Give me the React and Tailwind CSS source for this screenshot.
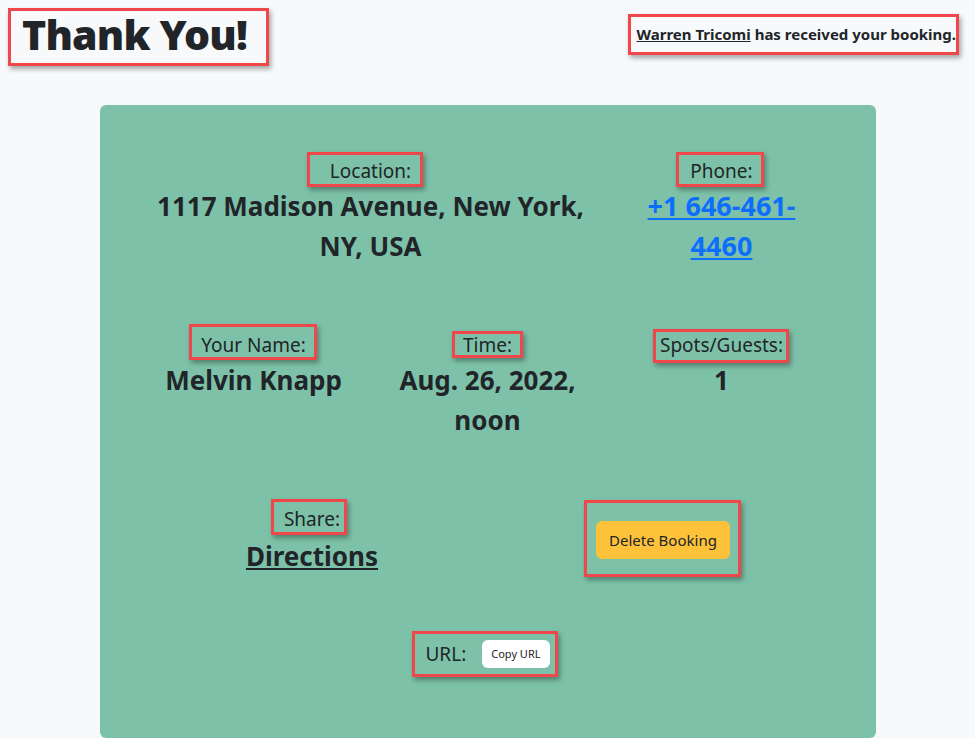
import React from "react";

function Mark({ className }) {
  return (
    <span
      className={`pointer-events-none absolute border-[3px] border-[#f0474a] shadow-[2px_3px_5px_rgba(0,0,0,0.35)] ${className}`}
    />
  );
}

function Label({ children, box }) {
  return (
    <div className="leading-[30px] text-[19px]">
      <span className="relative inline-block">
        {children}
        <Mark className={box} />
      </span>
    </div>
  );
}

function Value({ children, className = "" }) {
  return <div className={`text-[26px] font-bold leading-[40px] ${className}`}>{children}</div>;
}

export default function App() {
  return (
    <div className="min-h-screen bg-[#f8f9fa] font-['Noto_Sans',sans-serif] text-[#212529]">
      <header className="flex h-[68px] items-center justify-between pl-[22px] pr-[19px]">
        <h1 className="relative text-[41px] font-black leading-[50px] tracking-[-0.8px]">
          Thank You!
          <Mark className="-left-[14px] -right-[22px] top-[-1px] -bottom-[7px]" />
        </h1>
        <p className="relative text-[15px] font-bold leading-[22px]">
          <a href="#" className="underline">Warren Tricomi</a> has received your booking.
          <Mark className="-left-[9px] -right-[3px] -top-[9px] -bottom-[10px]" />
        </p>
      </header>

      <div className="mx-auto mt-[37px] h-[633px] w-[776px] rounded-md bg-[#7dc2a8] px-[37px] pt-[51px] text-center">
        <div className="grid grid-cols-3">
          <div className="col-span-2">
            <Label box="-left-[23px] -right-[12px] -top-[4px] -bottom-[1px]">Location:</Label>
            <Value>
              1117 Madison Avenue, New York,
              <br />
              NY, USA
            </Value>
          </div>
          <div>
            <Label box="-left-[14px] -right-[11px] -top-[4px] -bottom-[1px]">Phone:</Label>
            <Value>
              <a href="#" className="text-[27px] text-[#0d6efd] underline">
                +1 646-461-
                <br />
                4460
              </a>
            </Value>
          </div>
        </div>

        <div className="mt-[64px] grid grid-cols-3">
          <div>
            <Label box="-left-[12px] -right-[11px] -top-[6px] bottom-0">Your Name:</Label>
            <Value>Melvin Knapp</Value>
          </div>
          <div>
            <Label box="-left-[11px] -right-[11px] top-[1px] bottom-[2px]">Time:</Label>
            <Value>
              Aug. 26, 2022,
              <br />
              noon
            </Value>
          </div>
          <div>
            <Label box="-left-[7px] -right-[6px] -top-[1px] -bottom-[3px]">Spots/Guests:</Label>
            <Value>1</Value>
          </div>
        </div>

        <div className="mt-[64px] grid grid-cols-2">
          <div>
            <Label box="-left-[13px] -right-[7px] -top-[5px] -bottom-[1px]">Share:</Label>
            <Value className="pt-[2px]">
              <a href="#" className="underline">Directions</a>
            </Value>
          </div>
          <div className="flex items-center justify-center">
            <button className="relative h-[38px] rounded-md bg-[#fdc23a] px-[13px] text-[15px] text-[#212529]">
              Delete Booking
              <Mark className="-left-[12px] -right-[11px] -top-[21px] -bottom-[18px]" />
            </button>
          </div>
        </div>

        <div className="mt-[64px] flex justify-center">
          <div className="relative flex items-center gap-[16px]">
            <span className="text-[19px] leading-[28px]">URL:</span>
            <button className="h-[28px] rounded-md bg-white px-[9px] text-[11px] text-[#212529]">
              Copy URL
            </button>
            <Mark className="-left-[13px] -right-[8px] -top-[9px] -bottom-[9px]" />
          </div>
        </div>
      </div>
    </div>
  );
}
